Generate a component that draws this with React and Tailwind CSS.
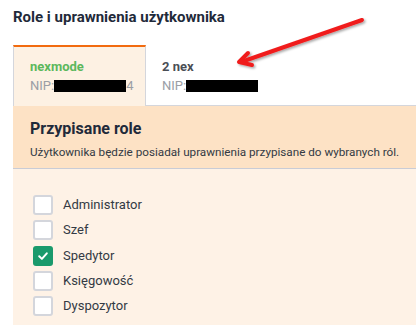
import React from "react";

const roles = [
  { name: "Administrator", checked: false },
  { name: "Szef", checked: false },
  { name: "Spedytor", checked: true },
  { name: "Księgowość", checked: false },
  { name: "Dyspozytor", checked: false },
];

function Checkbox({ checked }) {
  if (checked) {
    return (
      <div className="w-[20px] h-[20px] rounded-[3px] bg-[#1a9a6c] flex items-center justify-center">
        <svg width="12" height="12" viewBox="0 0 12 12" fill="none">
          <path d="M2.2 6.3 L4.9 8.9 L9.8 3.3" stroke="white" strokeWidth="2" strokeLinecap="round" strokeLinejoin="round" />
        </svg>
      </div>
    );
  }
  return <div className="w-[20px] h-[20px] rounded-[3px] border-2 border-[#d4d6dc] bg-white" />;
}

export default function App() {
  return (
    <div className="relative w-[416px] h-[325px] overflow-hidden bg-white font-['Roboto',sans-serif]">
      <div className="pt-[7px] pl-[13px] text-[15px] leading-[20px] font-bold text-[#1f2a3a]">
        Role i uprawnienia użytkownika
      </div>

      <div className="flex mt-[18px] pl-[13px]">
        <div className="w-[133px] h-[61px] border-t-2 border-t-[#f26b0f] border-x border-x-[#d4d6dc] bg-[#fdf1e3] pl-[16px] pt-[12px]">
          <div className="text-[13px] leading-[16px] font-bold text-[#5cb85c]">nexmode</div>
          <div className="mt-[3px] flex items-center text-[13px] leading-[16px] text-[#9a9ea5]">
            <span>NIP:</span>
            <span className="w-[72px] h-[12px] bg-black" />
            <span>4</span>
          </div>
        </div>
        <div className="flex-1 h-[61px] border-b border-b-[#d4d6dc] pl-[16px] pt-[14px]">
          <div className="text-[13px] leading-[16px] font-bold text-[#4a4e55]">2 nex</div>
          <div className="mt-[3px] flex items-center text-[13px] leading-[16px] text-[#9a9ea5]">
            <span>NIP:</span>
            <span className="w-[72px] h-[12px] bg-black" />
          </div>
        </div>
      </div>

      <div className="ml-[13px]">
        <div className="bg-[#fde2c5] border-b border-b-[#c9ccd6] pl-[17px] pt-[13px] h-[63px]">
          <div className="text-[16px] leading-[20px] font-bold text-[#1f2a3a]">Przypisane role</div>
          <div className="mt-[5px] whitespace-nowrap text-[11.7px] leading-[16px] text-[#333a44]">
            Użytkownika będzie posiadał uprawnienia przypisane do wybranych ról.
          </div>
        </div>
        <div className="bg-[#fef2e6] pl-[20px] pt-[26px] pb-[20px] flex flex-col gap-[5.25px]">
          {roles.map((r) => (
            <div key={r.name} className="flex items-center gap-[10px] h-[20px]">
              <Checkbox checked={r.checked} />
              <span className="text-[13px] leading-[16px] text-[#333a44]">{r.name}</span>
            </div>
          ))}
        </div>
      </div>

      <svg className="absolute left-0 top-0 pointer-events-none" width="416" height="120" viewBox="0 0 416 120">
        <defs>
          <filter id="sh" x="-20%" y="-50%" width="140%" height="200%">
            <feDropShadow dx="1.5" dy="1.5" stdDeviation="1.2" floodColor="#000" floodOpacity="0.35" />
          </filter>
        </defs>
        <g filter="url(#sh)" stroke="#f01e1e" strokeWidth="4" strokeLinecap="round" strokeLinejoin="round" fill="none">
          <path d="M362 20 L241 62" />
          <path d="M248 53 L239 62 L252 65" />
        </g>
      </svg>
    </div>
  );
}
